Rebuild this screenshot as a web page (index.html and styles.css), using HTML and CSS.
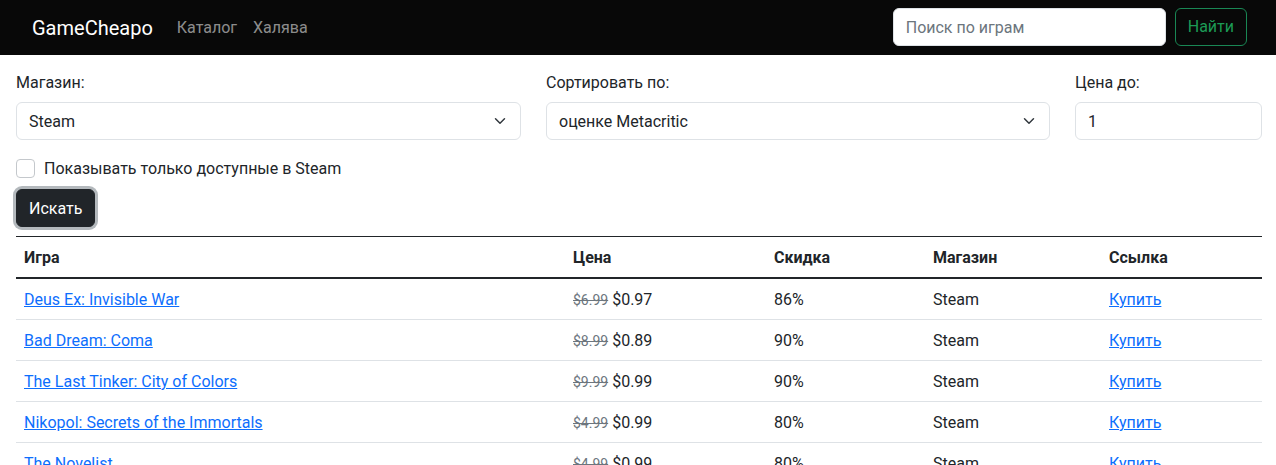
FILE: index.html
```html
<!DOCTYPE html>
<html lang="ru">
<head>
<meta charset="utf-8">
<title>GameCheapo</title>
<link rel="stylesheet" href="styles.css">
</head>
<body>
<nav class="navbar">
  <a class="brand" href="#">GameCheapo</a>
  <ul class="nav">
    <li><a class="nav-link" href="#">Каталог</a></li>
    <li><a class="nav-link" href="#">Халява</a></li>
  </ul>
  <form class="search">
    <input class="search-input" type="search" placeholder="Поиск по играм">
    <button class="btn-outline" type="button">Найти</button>
  </form>
</nav>

<main class="content">
  <div class="filters">
    <div class="field">
      <label class="form-label">Магазин:</label>
      <div class="select">Steam</div>
    </div>
    <div class="field">
      <label class="form-label">Сортировать по:</label>
      <div class="select">оценке Metacritic</div>
    </div>
    <div class="field">
      <label class="form-label">Цена до:</label>
      <div class="input">1</div>
    </div>
  </div>

  <label class="form-check">
    <span class="check-box"></span>
    <span class="check-label">Показывать только доступные в Steam</span>
  </label>

  <button class="btn-dark" type="button">Искать</button>

  <table class="table">
    <thead>
      <tr>
        <th class="c-game">Игра</th>
        <th class="c-price">Цена</th>
        <th class="c-disc">Скидка</th>
        <th class="c-store">Магазин</th>
        <th class="c-link">Ссылка</th>
      </tr>
    </thead>
    <tbody>
      <tr>
        <td><a href="#">Deus Ex: Invisible War</a></td>
        <td><s class="old">$6.99</s> $0.97</td>
        <td>86%</td>
        <td>Steam</td>
        <td><a href="#">Купить</a></td>
      </tr>
      <tr>
        <td><a href="#">Bad Dream: Coma</a></td>
        <td><s class="old">$8.99</s> $0.89</td>
        <td>90%</td>
        <td>Steam</td>
        <td><a href="#">Купить</a></td>
      </tr>
      <tr>
        <td><a href="#">The Last Tinker: City of Colors</a></td>
        <td><s class="old">$9.99</s> $0.99</td>
        <td>90%</td>
        <td>Steam</td>
        <td><a href="#">Купить</a></td>
      </tr>
      <tr>
        <td><a href="#">Nikopol: Secrets of the Immortals</a></td>
        <td><s class="old">$4.99</s> $0.99</td>
        <td>80%</td>
        <td>Steam</td>
        <td><a href="#">Купить</a></td>
      </tr>
      <tr>
        <td><a href="#">The Novelist</a></td>
        <td><s class="old">$4.99</s> $0.99</td>
        <td>80%</td>
        <td>Steam</td>
        <td><a href="#">Купить</a></td>
      </tr>
    </tbody>
  </table>
</main>
</body>
</html>
```
FILE: styles.css
```css
*{box-sizing:border-box}
html,body{margin:0;padding:0}
body{
  font-family:Roboto,"Liberation Sans",sans-serif;
  font-size:16px;
  line-height:24px;
  color:#212529;
  background:#fff;
}
a{color:#0d6efd;text-decoration:underline}

/* navbar */
.navbar{
  display:flex;
  align-items:center;
  height:55px;
  padding:0 29px 0 32px;
  background:#080808;
}
.brand{
  color:#fff;
  font-size:20px;
  line-height:30px;
  text-decoration:none;
  margin-right:16px;
}
.nav{
  display:flex;
  list-style:none;
  margin:0;
  padding:0;
}
.nav-link{
  display:block;
  padding:8px;
  color:rgba(255,255,255,.55);
  text-decoration:none;
}
.search{
  margin-left:auto;
  display:flex;
  gap:9px;
  margin-top:-1px;
}
.search-input{
  width:273px;
  height:38px;
  padding:6px 12px;
  border:1px solid #dee2e6;
  border-radius:6px;
  font:inherit;
  color:#212529;
  background:#fff;
  outline:none;
}
.search-input::placeholder{color:#6c757d}
.btn-outline{
  height:38px;
  padding:6px 12px;
  border:1px solid #198754;
  border-radius:6px;
  background:transparent;
  color:#1c9a55;
  font:inherit;
}

/* content */
.content{
  padding:15px 14px 0 16px;
}
.filters{
  display:grid;
  grid-template-columns:minmax(0,505fr) minmax(0,504fr) minmax(0,187fr);
  column-gap:25px;
}
.form-label{
  display:block;
  padding-top:1px;
  margin-bottom:7px;
}
.select,.input{
  height:38px;
  padding:7px 36px 5px 12px;
  border:1px solid #dee2e6;
  border-radius:6px;
  background:#fff;
}
.select{
  background-image:url("data:image/svg+xml,%3csvg xmlns='http://www.w3.org/2000/svg' viewBox='0 0 16 16'%3e%3cpath fill='none' stroke='%23343a40' stroke-linecap='round' stroke-linejoin='round' stroke-width='2' d='m2 5 6 6 6-6'/%3e%3c/svg%3e");
  background-repeat:no-repeat;
  background-position:right 12px center;
  background-size:16px 12px;
}
.form-check{
  display:flex;
  align-items:center;
  gap:9px;
  margin-top:16px;
  height:24px;
}
.check-box{
  width:19px;
  height:19px;
  border:1px solid #c4c8cc;
  border-radius:4px;
  background:#fff;
  flex:none;
}
.check-label{
  padding-top:1px;
}
.btn-dark{
  display:block;
  margin-top:9px;
  margin-left:0;
  height:38px;
  padding:7px 12px 5px;
  border:1px solid #212529;
  border-radius:6px;
  background:#212529;
  color:#fff;
  font:inherit;
  box-shadow:0 0 0 3px rgba(130,138,145,.6);
}

/* table */
.table{
  width:100%;
  margin-top:9px;
  border-collapse:collapse;
  table-layout:fixed;
  border-top:1px solid #212529;
}
.table th,.table td{
  padding:9px 8px 7px;
  text-align:left;
  vertical-align:top;
}
.table th{
  font-weight:700;
  border-bottom:2px solid #212529;
}
.table td{
  border-bottom:1px solid #dee2e6;
}
.c-game{width:549px}
.c-price{width:201px}
.c-disc{width:159px}
.c-store{width:176px}
.c-link{width:161px}
.old{
  font-size:14px;
  color:#6c757d;
}
```
